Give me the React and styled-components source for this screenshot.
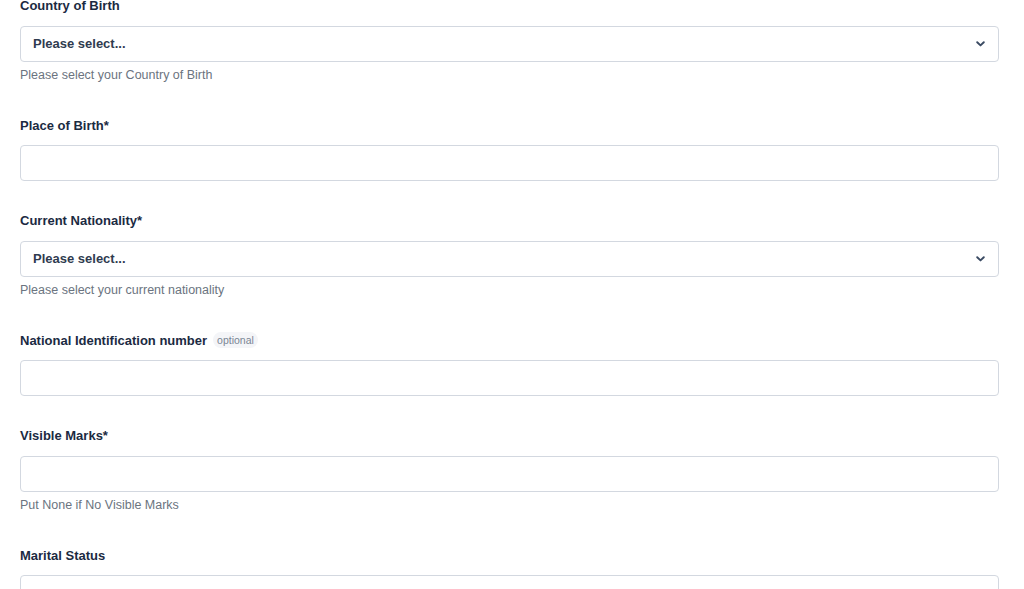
import React from "react";
import styled, { createGlobalStyle } from "styled-components";

const GlobalStyle = createGlobalStyle`
  html, body {
    margin: 0;
    padding: 0;
    background: #ffffff;
    overflow: hidden;
  }
  body {
    font-family: "Liberation Sans", Arial, sans-serif;
  }
`;

// Form wrapper (page is scrolled a bit, first label sits at the very top)
const Form = styled.form`
  display: flex;
  flex-direction: column;
  gap: 29.5px;
  padding: 0 25px 0 20px;
  margin-top: -4.5px;
`;

const Field = styled.div`
  display: flex;
  flex-direction: column;
`;

const Label = styled.label`
  display: flex;
  align-items: center;
  gap: 6px;
  height: 20px;
  margin-bottom: 10px;
  font-size: 13px;
  font-weight: 700;
  color: #1b2a42;
`;

const Optional = styled.span`
  font-size: 10.5px;
  font-weight: 400;
  color: #7a8594;
  background: #f4f5f8;
  border-radius: 8px;
  padding: 2px 4px;
`;

const TextInput = styled.input`
  box-sizing: border-box;
  width: 100%;
  height: 36px;
  border: 1px solid #d3d8e0;
  border-radius: 4px;
  background: #fff;
  padding: 0 12px;
  font-family: inherit;
  font-size: 13px;
  color: #1c2a3e;
  outline: none;
`;

const SelectBox = styled.div`
  box-sizing: border-box;
  width: 100%;
  height: 36px;
  border: 1px solid #d3d8e0;
  border-radius: 4px;
  background: #fff;
  padding: 0 13px 0 12px;
  display: flex;
  align-items: center;
  justify-content: space-between;
  font-size: 13px;
  font-weight: 700;
  color: #2f3b4f;
`;

const Chevron = styled.svg`
  width: 9px;
  height: 6px;
  flex-shrink: 0;
`;

const Help = styled.div`
  margin-top: 3px;
  line-height: 20px;
  padding-bottom: 1px;
  font-size: 12.5px;
  color: #6b7480;
`;

function Select() {
  return (
    <SelectBox>
      <span>Please select...</span>
      <Chevron viewBox="0 0 9 6">
        <path d="M1.2 1.2 L4.5 4.4 L7.8 1.2" fill="none" stroke="#3a4a62" strokeWidth="1.9" strokeLinecap="round" strokeLinejoin="round" />
      </Chevron>
    </SelectBox>
  );
}

export default function App() {
  return (
    <>
      <GlobalStyle />
      <Form>
        <Field>
          <Label>Country of Birth</Label>
          <Select />
          <Help>Please select your Country of Birth</Help>
        </Field>

        <Field>
          <Label>Place of Birth*</Label>
          <TextInput />
        </Field>

        <Field>
          <Label>Current Nationality*</Label>
          <Select />
          <Help>Please select your current nationality</Help>
        </Field>

        <Field>
          <Label>
            National Identification number <Optional>optional</Optional>
          </Label>
          <TextInput />
        </Field>

        <Field>
          <Label>Visible Marks*</Label>
          <TextInput />
          <Help>Put None if No Visible Marks</Help>
        </Field>

        <Field>
          <Label>Marital Status</Label>
          <Select />
        </Field>
      </Form>
    </>
  );
}
